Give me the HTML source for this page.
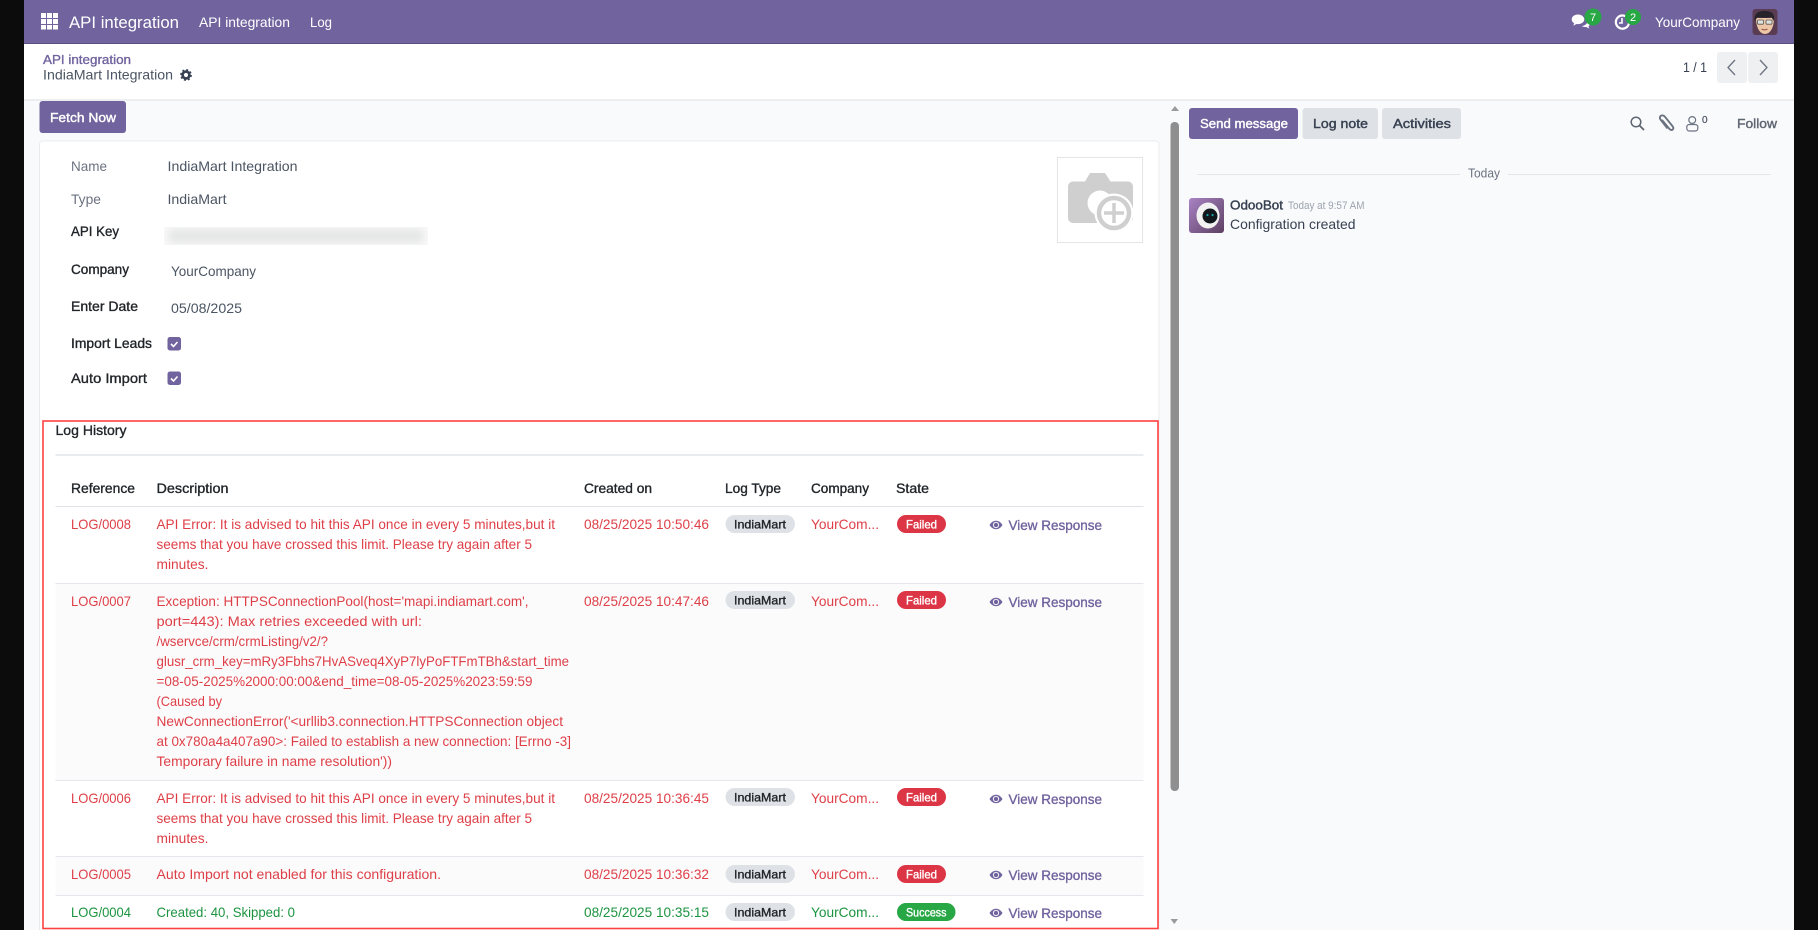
<!DOCTYPE html>
<html lang="en"><head><meta charset="utf-8"><title>IndiaMart Integration</title>
<style>
html,body{margin:0;padding:0;background:#0c0c0c;width:1818px;height:930px;overflow:hidden}
svg{display:block}
text{font-family:"Liberation Sans",sans-serif;font-size:14px;fill:#4b5563}
.w{fill:#fff}.g{fill:#6b7280}
.l,.h{fill:#212529;stroke:#212529;stroke-width:.35}
.r{fill:#de3f47}.s{fill:#1d9440}
.bd{font-size:12px;fill:#212529;stroke:#212529;stroke-width:.35}
.bw{font-size:12px;fill:#fff;stroke:#fff;stroke-width:.35}
.v{fill:#71639e;stroke:#71639e;stroke-width:.35}
.bt{font-size:13px;stroke-width:.4}
</style></head><body>
<svg width="1818" height="930" viewBox="0 0 1818 930" xmlns="http://www.w3.org/2000/svg">
<defs>
<filter id="bl" x="-10%" y="-80%" width="120%" height="260%"><feGaussianBlur stdDeviation="4.5"/></filter>
<clipPath id="kc"><rect x="164" y="227" width="264" height="18"/></clipPath>
<symbol id="eye" viewBox="0 0 14 10" overflow="visible"><path d="M0.5 5C2.5 1.8 4.8 0.8 7 0.8S11.5 1.8 13.5 5C11.5 8.2 9.2 9.2 7 9.2S2.5 8.2 0.5 5Z" fill="#71639e"/><circle cx="7" cy="5" r="3.1" fill="#fff"/><circle cx="7" cy="5" r="2.2" fill="#71639e"/></symbol>
</defs>
<rect width="1818" height="930" fill="#0c0c0c"/>
<rect x="24" y="0" width="1770" height="930" fill="#f9fafb"/>
<!-- navbar -->
<rect x="24" y="0" width="1770" height="44" fill="#71639e"/>
<rect x="24" y="43" width="1770" height="1" fill="#5c5080"/>
<g fill="#fff">
<rect x="41" y="13" width="5" height="5"/><rect x="47" y="13" width="5" height="5"/><rect x="53" y="13" width="5" height="5"/>
<rect x="41" y="19" width="5" height="5"/><rect x="47" y="19" width="5" height="5"/><rect x="53" y="19" width="5" height="5"/>
<rect x="41" y="25" width="5" height="4.5"/><rect x="47" y="25" width="5" height="4.5"/><rect x="53" y="25" width="5" height="4.5"/>
</g>
<text x="69" y="28" class="w" style="font-size:16.5px" textLength="110" lengthAdjust="spacingAndGlyphs">API integration</text>
<text x="199" y="27" class="w" textLength="91" lengthAdjust="spacingAndGlyphs">API integration</text>
<text x="310" y="27" class="w" textLength="22" lengthAdjust="spacingAndGlyphs">Log</text>
<!-- systray -->
<path d="M1578 14.500c-3.600 0-6.300 2.200-6.300 4.900 0 1.600.9 3 2.400 3.900l-.7 2.400 3-1.700c.6.1 1 .1 1.600.1 3.600 0 6.300-2.200 6.300-4.700s-2.700-4.900-6.300-4.900z" fill="#fff"/>
<path d="M1586 19.500c2.500.6 4 2.200 4 4 0 1.100-.6 2.100-1.500 2.800l.6 2.200-2.900-1.500c-1.700.1-3.300-.2-4.500-1 3.300-.2 6-2.500 6.100-5.500z" fill="#fff"/>
<circle cx="1593" cy="17" r="8.500" fill="#28a745"/><text x="1593" y="21" class="w" text-anchor="middle" style="font-size:11px">7</text>
<path d="M1628 18.500a6.600 6.600 0 1 0 1 4.500" fill="none" stroke="#fff" stroke-width="2.200"/><path d="M1622 18v5h-3" fill="none" stroke="#fff" stroke-width="1.600"/>
<circle cx="1633" cy="17" r="8" fill="#28a745"/><text x="1633" y="21" class="w" text-anchor="middle" style="font-size:11px">2</text>
<text x="1655" y="27" class="w" textLength="85" lengthAdjust="spacingAndGlyphs">YourCompany</text>
<!-- user avatar -->
<rect x="1752.500" y="9" width="25" height="26" rx="3" fill="#5a3c52"/>
<path d="M1756 18c0 9 3.500 16 9 16s9-7 9-16z" fill="#ecc6a6"/>
<path d="M1755 21c-1.500-6 2-9.500 7.500-10 5.500-.5 10 1 11 4 1 2 .6 4 0 6l-2-4c-4 1-10 1-14 0z" fill="#26232a"/>
<rect x="1757.500" y="20" width="6" height="4.200" rx="1" fill="#dfe3dd" stroke="#555" stroke-width=".8"/><rect x="1766" y="20" width="6" height="4.200" rx="1" fill="#dfe3dd" stroke="#555" stroke-width=".8"/>
<path d="M1761.500 29c2 1.200 4 1.200 6 0" stroke="#8a4a3a" fill="none"/>
<!-- control panel -->
<rect x="24" y="44" width="1770" height="55" fill="#fff"/>
<rect x="24" y="99" width="1770" height="2" fill="#eceef2"/>
<text x="43" y="64" style="font-size:12.500px;fill:#71639e;stroke:#71639e;stroke-width:.35" textLength="88" lengthAdjust="spacingAndGlyphs">API integration</text>
<text x="43" y="79.500" textLength="130" lengthAdjust="spacingAndGlyphs">IndiaMart Integration</text>
<g transform="translate(186,75)"><circle r="3.400" fill="none" stroke="#374151" stroke-width="2.600"/><circle r="5" fill="none" stroke="#374151" stroke-width="1.800" stroke-dasharray="2 1.930"/></g>
<text x="1683" y="72" style="fill:#374151" textLength="24" lengthAdjust="spacingAndGlyphs">1 / 1</text>
<rect x="1717" y="52" width="30" height="31" rx="3" fill="#eff0f2"/><rect x="1748" y="52" width="30" height="31" rx="3" fill="#eff0f2"/>
<path d="M1735 60l-7 7.500 7 7.500" fill="none" stroke="#6b7280" stroke-width="1.300"/><path d="M1760 60l7 7.500-7 7.500" fill="none" stroke="#6b7280" stroke-width="1.300"/>
<!-- fetch -->
<rect x="39.500" y="101" width="86.500" height="32" rx="3" fill="#71639e"/>
<text x="50" y="122" class="w bt" style="stroke:#fff" textLength="66" lengthAdjust="spacingAndGlyphs">Fetch Now</text>
<!-- card -->
<path d="M39.500 930V144a3 3 0 0 1 3-3H1156a3 3 0 0 1 3 3V930" fill="#fff" stroke="#e9ecef"/>
<text x="71" y="171" class="g" textLength="36" lengthAdjust="spacingAndGlyphs">Name</text>
<text x="167.500" y="171" textLength="130" lengthAdjust="spacingAndGlyphs">IndiaMart Integration</text>
<text x="71" y="204" class="g" textLength="30" lengthAdjust="spacingAndGlyphs">Type</text>
<text x="167.500" y="204" textLength="59" lengthAdjust="spacingAndGlyphs">IndiaMart</text>
<text x="71" y="236" class="l" textLength="48" lengthAdjust="spacingAndGlyphs">API Key</text>
<rect x="164" y="227" width="264" height="18" fill="#fafafa"/>
<g clip-path="url(#kc)"><rect x="168" y="229" width="256" height="14" fill="#e4e5e5" filter="url(#bl)"/></g>
<text x="71" y="274" class="l" textLength="58" lengthAdjust="spacingAndGlyphs">Company</text>
<text x="171" y="276" textLength="85" lengthAdjust="spacingAndGlyphs">YourCompany</text>
<text x="71" y="311" class="l" textLength="67" lengthAdjust="spacingAndGlyphs">Enter Date</text>
<text x="171" y="313" textLength="71" lengthAdjust="spacingAndGlyphs">05/08/2025</text>
<text x="71" y="348" class="l" textLength="81" lengthAdjust="spacingAndGlyphs">Import Leads</text>
<rect x="167.500" y="337" width="13.500" height="13.500" rx="2.500" fill="#71639e"/><path d="M171 344l2.500 2.500 4-4.500" fill="none" stroke="#fff" stroke-width="1.600"/>
<text x="71" y="383" class="l" textLength="76" lengthAdjust="spacingAndGlyphs">Auto Import</text>
<rect x="167.500" y="371.500" width="13.500" height="13.500" rx="2.500" fill="#71639e"/><path d="M171 378.500l2.500 2.500 4-4.500" fill="none" stroke="#fff" stroke-width="1.600"/>
<!-- image -->
<rect x="1057.500" y="157.500" width="85" height="85" fill="#fff" stroke="#e3e5e8"/>
<path d="M1073 181.500h12l5-8.500h15l5.500 8.500h17.500a5 5 0 0 1 5 5v31.500a5 5 0 0 1-5 5h-55a5 5 0 0 1-5-5V186.500a5 5 0 0 1 5-5z" fill="#cfcfcf"/>
<circle cx="1100" cy="203" r="12.500" fill="#fff"/>
<circle cx="1114" cy="213" r="19.500" fill="#fff"/><circle cx="1114" cy="213" r="15" fill="#fff" stroke="#cfcfcf" stroke-width="4.500"/>
<path d="M1114 203v20M1104 213h20" stroke="#cfcfcf" stroke-width="3.500"/>
<!-- Log history -->
<text x="55.500" y="435" class="l" textLength="71" lengthAdjust="spacingAndGlyphs">Log History</text>
<rect x="55.500" y="454" width="1088" height="2" fill="#e9ecef"/>
<text x="71" y="493" class="h" textLength="64" lengthAdjust="spacingAndGlyphs">Reference</text>
<text x="156.500" y="493" class="h" textLength="72" lengthAdjust="spacingAndGlyphs">Description</text>
<text x="584" y="493" class="h" textLength="68" lengthAdjust="spacingAndGlyphs">Created on</text>
<text x="725" y="493" class="h" textLength="56" lengthAdjust="spacingAndGlyphs">Log Type</text>
<text x="811" y="493" class="h" textLength="58" lengthAdjust="spacingAndGlyphs">Company</text>
<text x="896" y="493" class="h" textLength="33" lengthAdjust="spacingAndGlyphs">State</text>
<rect x="55.500" y="506" width="1088" height="1" fill="#dee2e6"/>
<rect x="55.500" y="584" width="1088" height="196" fill="#fbfbfc"/>
<rect x="55.500" y="857" width="1088" height="38" fill="#fbfbfc"/>
<rect x="55.500" y="583" width="1088" height="1" fill="#e4e7eb"/>
<rect x="55.500" y="780" width="1088" height="1" fill="#e4e7eb"/>
<rect x="55.500" y="856" width="1088" height="1" fill="#e4e7eb"/>
<rect x="55.500" y="895" width="1088" height="1" fill="#e4e7eb"/>
<!-- row 1 -->
<text x="71" y="529" class="r" textLength="60" lengthAdjust="spacingAndGlyphs">LOG/0008</text>
<text x="156.500" y="529" class="r" textLength="398.500" lengthAdjust="spacingAndGlyphs">API Error: It is advised to hit this API once in every 5 minutes,but it</text>
<text x="156.500" y="549" class="r" textLength="375.500" lengthAdjust="spacingAndGlyphs">seems that you have crossed this limit. Please try again after 5</text>
<text x="156.500" y="569" class="r" textLength="52" lengthAdjust="spacingAndGlyphs">minutes.</text>
<text x="584" y="529" class="r" textLength="125" lengthAdjust="spacingAndGlyphs">08/25/2025 10:50:46</text>
<rect x="725.500" y="515" width="69.500" height="18" rx="9" fill="#dee2e6"/><text x="734" y="528.500" class="bd" textLength="52" lengthAdjust="spacingAndGlyphs">IndiaMart</text>
<text x="811" y="529" class="r" textLength="68" lengthAdjust="spacingAndGlyphs">YourCom...</text>
<rect x="897" y="515" width="49" height="18" rx="9" fill="#dc3545"/><text x="906" y="528.500" class="bw" textLength="31" lengthAdjust="spacingAndGlyphs">Failed</text>
<use href="#eye" x="989" y="520" width="14" height="10"/>
<text x="1008.500" y="530" class="v" textLength="93.500" lengthAdjust="spacingAndGlyphs">View Response</text>
<!-- row 2 -->
<text x="71" y="606" class="r" textLength="60" lengthAdjust="spacingAndGlyphs">LOG/0007</text>
<text x="156.500" y="606" class="r" textLength="372" lengthAdjust="spacingAndGlyphs">Exception: HTTPSConnectionPool(host='mapi.indiamart.com',</text>
<text x="156.500" y="626" class="r" textLength="265.500" lengthAdjust="spacingAndGlyphs">port=443): Max retries exceeded with url:</text>
<text x="156.500" y="646" class="r" textLength="171.500" lengthAdjust="spacingAndGlyphs">/wservce/crm/crmListing/v2/?</text>
<text x="156.500" y="666" class="r" textLength="412.500" lengthAdjust="spacingAndGlyphs">glusr_crm_key=mRy3Fbhs7HvASveq4XyP7lyPoFTFmTBh&amp;start_time</text>
<text x="156.500" y="686" class="r" textLength="376" lengthAdjust="spacingAndGlyphs">=08-05-2025%2000:00:00&amp;end_time=08-05-2025%2023:59:59</text>
<text x="156.500" y="706" class="r" textLength="65.500" lengthAdjust="spacingAndGlyphs">(Caused by</text>
<text x="156.500" y="726" class="r" textLength="406.500" lengthAdjust="spacingAndGlyphs">NewConnectionError('&lt;urllib3.connection.HTTPSConnection object</text>
<text x="156.500" y="746" class="r" textLength="414.500" lengthAdjust="spacingAndGlyphs">at 0x780a4a407a90&gt;: Failed to establish a new connection: [Errno -3]</text>
<text x="156.500" y="766" class="r" textLength="235.500" lengthAdjust="spacingAndGlyphs">Temporary failure in name resolution'))</text>
<text x="584" y="606" class="r" textLength="125" lengthAdjust="spacingAndGlyphs">08/25/2025 10:47:46</text>
<rect x="725.500" y="591" width="69.500" height="18" rx="9" fill="#dee2e6"/><text x="734" y="604.500" class="bd" textLength="52" lengthAdjust="spacingAndGlyphs">IndiaMart</text>
<text x="811" y="606" class="r" textLength="68" lengthAdjust="spacingAndGlyphs">YourCom...</text>
<rect x="897" y="591" width="49" height="18" rx="9" fill="#dc3545"/><text x="906" y="604.500" class="bw" textLength="31" lengthAdjust="spacingAndGlyphs">Failed</text>
<use href="#eye" x="989" y="597" width="14" height="10"/>
<text x="1008.500" y="607" class="v" textLength="93.500" lengthAdjust="spacingAndGlyphs">View Response</text>
<!-- row 3 -->
<text x="71" y="803" class="r" textLength="60" lengthAdjust="spacingAndGlyphs">LOG/0006</text>
<text x="156.500" y="803" class="r" textLength="398.500" lengthAdjust="spacingAndGlyphs">API Error: It is advised to hit this API once in every 5 minutes,but it</text>
<text x="156.500" y="823" class="r" textLength="375.500" lengthAdjust="spacingAndGlyphs">seems that you have crossed this limit. Please try again after 5</text>
<text x="156.500" y="843" class="r" textLength="52" lengthAdjust="spacingAndGlyphs">minutes.</text>
<text x="584" y="803" class="r" textLength="125" lengthAdjust="spacingAndGlyphs">08/25/2025 10:36:45</text>
<rect x="725.500" y="788" width="69.500" height="18" rx="9" fill="#dee2e6"/><text x="734" y="801.500" class="bd" textLength="52" lengthAdjust="spacingAndGlyphs">IndiaMart</text>
<text x="811" y="803" class="r" textLength="68" lengthAdjust="spacingAndGlyphs">YourCom...</text>
<rect x="897" y="788" width="49" height="18" rx="9" fill="#dc3545"/><text x="906" y="801.500" class="bw" textLength="31" lengthAdjust="spacingAndGlyphs">Failed</text>
<use href="#eye" x="989" y="794" width="14" height="10"/>
<text x="1008.500" y="804" class="v" textLength="93.500" lengthAdjust="spacingAndGlyphs">View Response</text>
<!-- row 4 -->
<text x="71" y="879" class="r" textLength="60" lengthAdjust="spacingAndGlyphs">LOG/0005</text>
<text x="156.500" y="879" class="r" textLength="284.500" lengthAdjust="spacingAndGlyphs">Auto Import not enabled for this configuration.</text>
<text x="584" y="879" class="r" textLength="125" lengthAdjust="spacingAndGlyphs">08/25/2025 10:36:32</text>
<rect x="725.500" y="865" width="69.500" height="18" rx="9" fill="#dee2e6"/><text x="734" y="878.500" class="bd" textLength="52" lengthAdjust="spacingAndGlyphs">IndiaMart</text>
<text x="811" y="879" class="r" textLength="68" lengthAdjust="spacingAndGlyphs">YourCom...</text>
<rect x="897" y="865" width="49" height="18" rx="9" fill="#dc3545"/><text x="906" y="878.500" class="bw" textLength="31" lengthAdjust="spacingAndGlyphs">Failed</text>
<use href="#eye" x="989" y="870" width="14" height="10"/>
<text x="1008.500" y="880" class="v" textLength="93.500" lengthAdjust="spacingAndGlyphs">View Response</text>
<!-- row 5 -->
<text x="71" y="917" class="s" textLength="60" lengthAdjust="spacingAndGlyphs">LOG/0004</text>
<text x="156.500" y="917" class="s" textLength="138.500" lengthAdjust="spacingAndGlyphs">Created: 40, Skipped: 0</text>
<text x="584" y="917" class="s" textLength="125" lengthAdjust="spacingAndGlyphs">08/25/2025 10:35:15</text>
<rect x="725.500" y="903" width="69.500" height="18" rx="9" fill="#dee2e6"/><text x="734" y="916.500" class="bd" textLength="52" lengthAdjust="spacingAndGlyphs">IndiaMart</text>
<text x="811" y="917" class="s" textLength="68" lengthAdjust="spacingAndGlyphs">YourCom...</text>
<rect x="897" y="903" width="58.500" height="18" rx="9" fill="#28a745"/><text x="906" y="916.500" class="bw" textLength="40.500" lengthAdjust="spacingAndGlyphs">Success</text>
<use href="#eye" x="989" y="908" width="14" height="10"/>
<text x="1008.500" y="918" class="v" textLength="93.500" lengthAdjust="spacingAndGlyphs">View Response</text>
<!-- red box -->
<rect x="43" y="421" width="1115" height="507.500" fill="none" stroke="#ff4040" stroke-width="1.600"/>
<!-- scrollbar -->
<path d="M1171 111l4-5 4 5z" fill="#9a9a9a"/>
<rect x="1170.500" y="122" width="8.500" height="669" rx="4" fill="#8f8f8f"/>
<path d="M1170.500 919h7.500l-3.750 5z" fill="#9a9a9a"/>
<!-- chatter -->
<rect x="1189" y="108" width="109" height="31" rx="3" fill="#71639e"/>
<text x="1200" y="128" class="w bt" style="stroke:#fff" textLength="88" lengthAdjust="spacingAndGlyphs">Send message</text>
<rect x="1302.500" y="108" width="75.500" height="31" rx="3" fill="#dee2e6"/>
<text x="1313" y="128" class="bt" style="fill:#374151;stroke:#374151" textLength="55" lengthAdjust="spacingAndGlyphs">Log note</text>
<rect x="1382" y="108" width="79" height="31" rx="3" fill="#dee2e6"/>
<text x="1393" y="128" class="bt" style="fill:#374151;stroke:#374151" textLength="58" lengthAdjust="spacingAndGlyphs">Activities</text>
<circle cx="1636" cy="122" r="4.800" fill="none" stroke="#5f6672" stroke-width="1.500"/><path d="M1639.500 125.500l4.500 4.500" stroke="#5f6672" stroke-width="1.800"/>
<path d="M1662 120l7.500 9c2 2.200 5 .3 3.400-2.300l-8-10c-2.700-3-6.600-.3-4.400 2.800l7 9" fill="none" stroke="#6b7280" stroke-width="1.900"/>
<circle cx="1692.200" cy="120" r="3.400" fill="none" stroke="#6b7280" stroke-width="1.200"/><rect x="1686.800" y="124.500" width="11" height="6.500" rx="2.500" fill="none" stroke="#6b7280" stroke-width="1.200"/>
<text x="1702" y="123" style="font-size:10px;fill:#4b5563;stroke:#4b5563;stroke-width:.2">0</text>
<text x="1737" y="128" class="bt" style="fill:#5f6672;stroke:#5f6672" textLength="40" lengthAdjust="spacingAndGlyphs">Follow</text>
<rect x="1197" y="174" width="263" height="1" fill="#e5e7eb"/><rect x="1508" y="174" width="263" height="1" fill="#e5e7eb"/>
<text x="1468" y="177.500" class="g" style="font-size:12.500px" textLength="32" lengthAdjust="spacingAndGlyphs">Today</text>
<!-- odoobot -->
<defs><linearGradient id="ob" x1="0" y1="0" x2="1" y2="1"><stop offset="0" stop-color="#a884c4"/><stop offset="1" stop-color="#5d3f62"/></linearGradient></defs>
<rect x="1189" y="198" width="35" height="35" rx="3" fill="url(#ob)"/>
<ellipse cx="1208" cy="215.500" rx="11.500" ry="13" fill="#f2f2f2"/>
<ellipse cx="1210" cy="216" rx="7.500" ry="7.500" fill="#10181d"/>
<circle cx="1207.500" cy="215" r="1.100" fill="#12a6a6"/><circle cx="1212.500" cy="215" r="1.100" fill="#12a6a6"/>
<text x="1230" y="209.500" class="bt" style="fill:#374151;stroke:#374151" textLength="53" lengthAdjust="spacingAndGlyphs">OdooBot</text>
<text x="1288" y="209" style="font-size:11px;fill:#9ca3af" textLength="76.500" lengthAdjust="spacingAndGlyphs">Today at 9:57 AM</text>
<text x="1230" y="229" style="fill:#374151" textLength="125.500" lengthAdjust="spacingAndGlyphs">Configration created</text>
</svg>
</body></html>
